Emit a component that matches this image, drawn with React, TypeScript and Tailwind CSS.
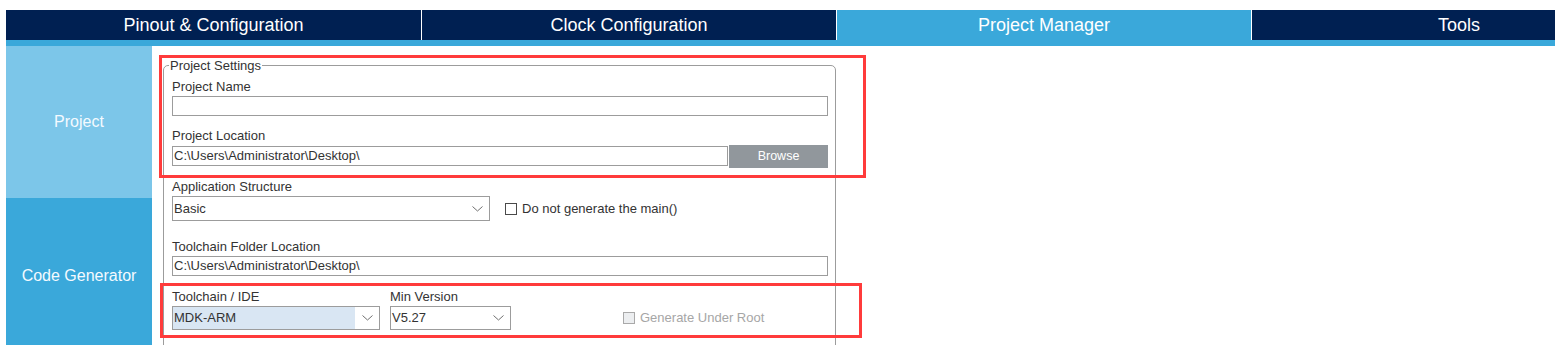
import { ReactNode } from 'react'

const tabs = [
  { label: 'Pinout & Configuration', active: false },
  { label: 'Clock Configuration', active: false },
  { label: 'Project Manager', active: true },
  { label: 'Tools', active: false },
]

function Chevron() {
  return (
    <svg width="11" height="6" viewBox="0 0 11 6" className="shrink-0">
      <polyline points="0.5,0.5 5.5,5 10.5,0.5" fill="none" stroke="#6f6f6f" strokeWidth="1" />
    </svg>
  )
}

function Label({ children, className = '' }: { children: ReactNode; className?: string }) {
  return <div className={`text-[13px] leading-[15px] text-[#333] mb-[2px] ${className}`}>{children}</div>
}

function TextBox({ value, className = '' }: { value?: string; className?: string }) {
  return (
    <div
      className={`h-[20px] border border-[#9c9c9c] bg-white flex items-center pl-[1px] text-[13px] text-[#333] whitespace-nowrap overflow-hidden ${className}`}
    >
      {value}
    </div>
  )
}

function Select({ value, width, highlighted }: { value: string; width: string; highlighted?: boolean }) {
  return (
    <div className={`${width} h-[24px] border border-[#9c9c9c] bg-white flex items-stretch text-[13px] text-[#333]`}>
      <div className={`flex-1 flex items-center pl-[1px] ${highlighted ? 'bg-[#d9e6f3]' : ''}`}>{value}</div>
      <div className="w-[24px] flex items-center justify-center pl-[1px]">
        <Chevron />
      </div>
    </div>
  )
}

export default function App() {
  return (
    <div className="relative w-[1555px] h-[345px] overflow-hidden bg-white font-['Liberation_Sans',Arial,sans-serif]">
      <div className="pt-[10px] pl-[6px]">
        {/* top tabs */}
        <div className="flex h-[30px] bg-[#002052] overflow-hidden">
          {tabs.map((tab, i) => (
            <div
              key={tab.label}
              className={`w-[415px] shrink-0 flex items-center justify-center pt-[1px] text-[18px] text-white ${
                i > 0 ? 'border-l border-white' : ''
              } ${tab.active ? 'bg-[#3aa8da]' : ''}`}
            >
              {tab.label}
            </div>
          ))}
        </div>
        <div className="h-[6px] bg-[#3aa8da]" />

        <div className="flex">
          {/* side menu */}
          <div className="w-[146px] shrink-0 flex flex-col">
            <div className="h-[152px] bg-[#7cc6e9] flex items-center justify-center text-[16px] text-[#f4faff]">
              Project
            </div>
            <div className="h-[156px] bg-[#3aa8da] flex items-center justify-center text-[16px] text-[#f4faff]">
              Code Generator
            </div>
          </div>

          {/* main */}
          <div className="flex-1 pl-[11px] pt-[12px]">
            <fieldset className="w-[673px] border border-[#9c9c9c] rounded-[5px] pl-[8px] pr-[7px] pb-[20px]">
              <legend className="-ml-[3px] px-[1px] text-[13px] leading-[15px] text-[#333]">Project Settings</legend>

              <Label className="mt-[6px]">Project Name</Label>
              <TextBox />

              <Label className="mt-[12px]">Project Location</Label>
              <div className="flex gap-[1px]">
                <TextBox value="C:\Users\Administrator\Desktop\" className="w-[556px] mt-[1px]" />
                <button className="w-[99px] h-[23px] bg-[#91979c] text-white text-[12.5px]">Browse</button>
              </div>

              <Label className="mt-[11px]">Application Structure</Label>
              <div className="flex items-center">
                <div className="w-[318px] h-[25px] border border-[#9c9c9c] bg-white flex items-center justify-between pl-[1px] pr-[6px] text-[13px] text-[#333]">
                  <span>Basic</span>
                  <Chevron />
                </div>
                <div className="ml-[15px] w-[12px] h-[12px] border border-[#4a4a4a] bg-white" />
                <span className="ml-[5px] text-[13px] text-[#333]">Do not generate the main()</span>
              </div>

              <Label className="mt-[18px]">Toolchain Folder Location</Label>
              <TextBox value="C:\Users\Administrator\Desktop\" />

              <div className="mt-[13px] flex items-end">
                <div>
                  <Label>Toolchain / IDE</Label>
                  <Select value="MDK-ARM" width="w-[208px]" highlighted />
                </div>
                <div className="ml-[10px]">
                  <Label>Min Version</Label>
                  <Select value="V5.27" width="w-[121px]" />
                </div>
                <div className="ml-[112px] h-[24px] flex items-center">
                  <div className="w-[12px] h-[12px] border border-[#a9a9a9] bg-[#eceef0]" />
                  <span className="ml-[5px] text-[13px] text-[#a6a6a6]">Generate Under Root</span>
                </div>
              </div>
            </fieldset>
          </div>
        </div>
      </div>

      {/* red annotation frames */}
      <div className="absolute left-[159px] top-[55px] w-[707px] h-[123px] border-[3px] border-[#ff3b3b] pointer-events-none" />
      <div className="absolute left-[160px] top-[283px] w-[702px] h-[55px] border-[3px] border-[#ff3b3b] pointer-events-none" />
    </div>
  )
}
